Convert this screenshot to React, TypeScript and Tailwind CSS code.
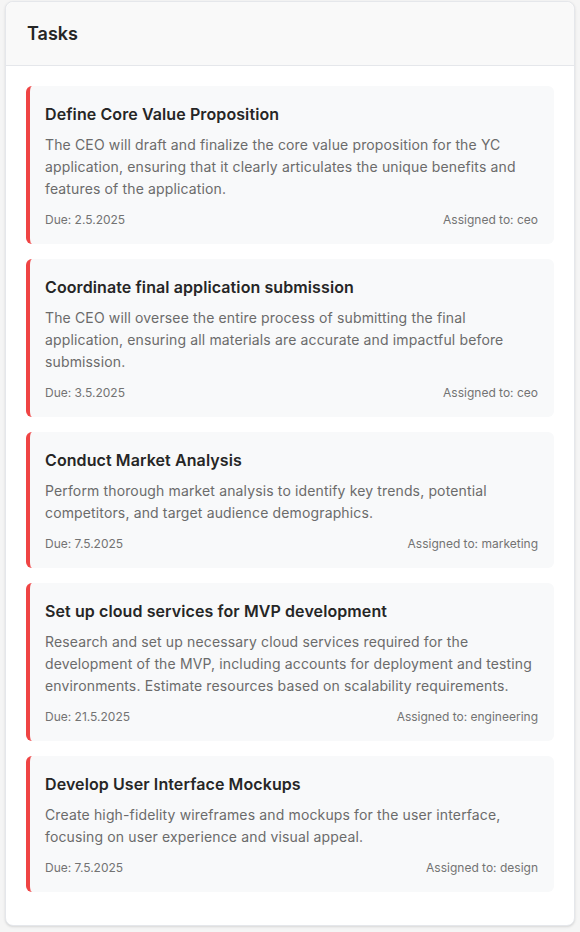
const tasks = [
  {
    title: 'Define Core Value Proposition',
    description:
      'The CEO will draft and finalize the core value proposition for the YC application, ensuring that it clearly articulates the unique benefits and features of the application.',
    due: '2.5.2025',
    assignee: 'ceo',
  },
  {
    title: 'Coordinate final application submission',
    description:
      'The CEO will oversee the entire process of submitting the final application, ensuring all materials are accurate and impactful before submission.',
    due: '3.5.2025',
    assignee: 'ceo',
  },
  {
    title: 'Conduct Market Analysis',
    description:
      'Perform thorough market analysis to identify key trends, potential competitors, and target audience demographics.',
    due: '7.5.2025',
    assignee: 'marketing',
  },
  {
    title: 'Set up cloud services for MVP development',
    description:
      'Research and set up necessary cloud services required for the development of the MVP, including accounts for deployment and testing environments. Estimate resources based on scalability requirements.',
    due: '21.5.2025',
    assignee: 'engineering',
  },
  {
    title: 'Develop User Interface Mockups',
    description:
      'Create high-fidelity wireframes and mockups for the user interface, focusing on user experience and visual appeal.',
    due: '7.5.2025',
    assignee: 'design',
  },
];

export default function App() {
  return (
    <div className="min-h-[932px] bg-[#f5f5f5] px-[5px] pt-px font-['Inter',sans-serif]">
      <div className="rounded-lg border border-[#e5e7eb] bg-white shadow-sm">
        {/* Header */}
        <div className="flex h-[64px] items-center rounded-t-lg border-b border-[#e5e7eb] bg-[#f9f9f9] px-[21px]">
          <h2 className="text-lg font-semibold text-[#262626]">Tasks</h2>
        </div>

        {/* Task list */}
        <div className="flex flex-col gap-[15px] px-5 pt-5 pb-[33px]">
          {tasks.map((task) => (
            <div
              key={task.title}
              className="rounded-md border-l-4 border-[#ef4444] bg-[#f8f9fa] p-4 pl-[15px]"
            >
              <h3 className="mb-2 text-base leading-6 font-semibold tracking-[0.006em] text-[#262626]">
                {task.title}
              </h3>
              <p className="text-sm leading-[22px] tracking-[0.01em] text-[#6b6b6b]">{task.description}</p>
              <div className="mt-3 flex items-center justify-between text-xs leading-4 text-[#737373]">
                <span>Due: {task.due}</span>
                <span>Assigned to: {task.assignee}</span>
              </div>
            </div>
          ))}
        </div>
      </div>
    </div>
  );
}
